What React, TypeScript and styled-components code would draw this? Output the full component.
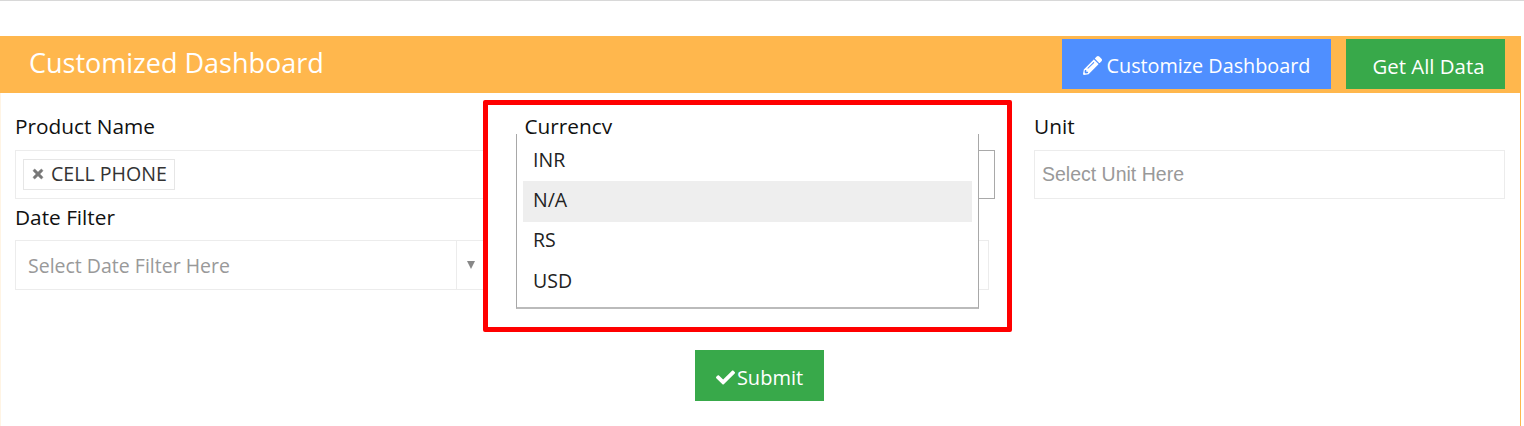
import React from "react";
import styled, { createGlobalStyle } from "styled-components";
import { FaPencilAlt, FaCheck, FaTimes } from "react-icons/fa";

const Global = createGlobalStyle`
  html, body { margin: 0; padding: 0; background: #fff; }
  body { font-family: "Open Sans", "Liberation Sans", sans-serif; overflow: hidden; }
`;

const Page = styled.div`
  position: relative;
  height: 426px;
  border-top: 1px solid #d8d8d8;
  box-sizing: border-box;
  padding-top: 35px;
`;

const Panel = styled.section`
  width: 1521px;
  height: 390px;
  box-sizing: border-box;
  border-right: 1px solid #ffb74d;
  border-left: 1px solid #fff4e4;
`;

const Header = styled.header`
  box-sizing: border-box;
  height: 57px;
  margin: 0 -1px;
  background: #ffb74d;
  display: flex;
  align-items: center;
  padding: 0 16px 2px 29px;
  color: #fff;
`;

const Title = styled.h1`
  flex: 1;
  margin: 0 0 1px;
  font-size: 27px;
  line-height: 34px;
  font-weight: 400;
`;

const Button = styled.button<{ $color: string; $width: number; $height: number; $gap: number; $size: number; $shift?: number }>`
  width: ${(p) => p.$width}px;
  height: ${(p) => p.$height}px;
  border: none;
  padding: 4px 0 0 ${(p) => p.$shift ?? 0}px;
  background: ${(p) => p.$color};
  color: #fff;
  font: 400 ${(p) => p.$size}px "Open Sans", sans-serif;
  display: inline-flex;
  align-items: center;
  justify-content: center;
  gap: ${(p) => p.$gap}px;
  svg { font-size: 19px; }
`;

const HeaderButton = styled(Button)`
  margin-left: 15px;
`;

const Form = styled.div`
  display: grid;
  grid-template-columns: repeat(3, 470.5px);
  column-gap: 39px;
  row-gap: 5px;
  padding: 20px 0 0 14px;
`;

const Group = styled.div<{ $inset?: number }>`
  margin-right: ${(p) => p.$inset ?? 0}px;
`;

const Label = styled.label<{ $gap: number }>`
  display: block;
  color: #111;
  font-size: 20.8px;
  line-height: 27px;
  margin-bottom: ${(p) => p.$gap}px;
`;

const Field = styled.div<{ $focus?: boolean; $h: number }>`
  height: ${(p) => p.$h}px;
  box-sizing: border-box;
  border: 1px solid ${(p) => (p.$focus ? "#a9a9a9" : "#ececec")};
  display: flex;
  align-items: center;
  background: #fff;
`;

const Placeholder = styled.span<{ $arial?: boolean }>`
  flex: 1;
  padding-left: ${(p) => (p.$arial ? 7 : 12)}px;
  color: #999;
  font-size: 19.5px;
  font-family: ${(p) => (p.$arial ? '"Liberation Sans", sans-serif' : '"Open Sans", sans-serif')};
`;

const Tag = styled.span`
  margin-left: 7px;
  height: 31px;
  box-sizing: border-box;
  border: 1px solid #e6e6e6;
  padding: 0 7px 2px;
  display: inline-flex;
  align-items: center;
  gap: 6px;
  color: #333;
  font-size: 19.6px;
  svg { color: #777; font-size: 14px; stroke: #777; stroke-width: 20px; }
`;

const Arrow = styled.span`
  width: 28px;
  align-self: stretch;
  border-left: 1px solid #ececec;
  display: flex;
  align-items: center;
  justify-content: center;
  &::after {
    content: "";
    border-left: 4.5px solid transparent;
    border-right: 4.5px solid transparent;
    border-top: 8px solid #888;
  }
`;

const Footer = styled.div`
  display: flex;
  justify-content: center;
  margin-top: 60px;
  padding-right: 2px;
`;

const Highlight = styled.div`
  position: absolute;
  left: 483px;
  top: 99px;
  width: 529px;
  height: 232px;
  box-sizing: border-box;
  border: 5px solid #ff0000;
  border-radius: 2px;
`;

const Menu = styled.ul`
  position: absolute;
  left: 516px;
  top: 133px;
  width: 463px;
  height: 175px;
  box-sizing: border-box;
  margin: 0;
  padding: 7px 6px 0;
  list-style: none;
  background: #fff;
  border: 1px solid #a8a8a8;
  border-top: none;
  border-bottom: 2px solid #bbb;
`;

const MenuItem = styled.li<{ $active?: boolean }>`
  height: 40.3px;
  box-sizing: border-box;
  display: flex;
  align-items: center;
  padding: 0 0 4px 10px;
  font-size: 19.5px;
  color: #222;
  background: ${(p) => (p.$active ? "#eeeeee" : "transparent")};
`;

export default function App() {
  return (
    <Page>
      <Global />
      <Panel>
        <Header>
          <Title>Customized Dashboard</Title>
          <HeaderButton $color="#4f8fff" $width={269} $height={50} $gap={5} $size={19.8}>
            <FaPencilAlt />
            Customize Dashboard
          </HeaderButton>
          <HeaderButton $color="#38a94a" $width={159} $height={50} $gap={0} $size={20.4} $shift={6}>Get All Data</HeaderButton>
        </Header>
        <Form>
          <Group>
            <Label $gap={10}>Product Name</Label>
            <Field $h={49}>
              <Tag>
                <FaTimes />
                CELL PHONE
              </Tag>
            </Field>
          </Group>
          <Group>
            <Label $gap={10}>Currency</Label>
            <Field $h={49} $focus />
          </Group>
          <Group>
            <Label $gap={10}>Unit</Label>
            <Field $h={49}>
              <Placeholder $arial>Select Unit Here</Placeholder>
            </Field>
          </Group>
          <Group>
            <Label $gap={9}>Date Filter</Label>
            <Field $h={50}>
              <Placeholder>Select Date Filter Here</Placeholder>
              <Arrow />
            </Field>
          </Group>
          <Group $inset={6}>
            <Label $gap={9}>&nbsp;</Label>
            <Field $h={50} />
          </Group>
        </Form>
        <Footer>
          <Button $color="#38a94a" $width={129} $height={51} $gap={2} $size={20}>
            <FaCheck />
            Submit
          </Button>
        </Footer>
      </Panel>
      <Highlight />
      <Menu>
        <MenuItem>INR</MenuItem>
        <MenuItem $active>N/A</MenuItem>
        <MenuItem>RS</MenuItem>
        <MenuItem>USD</MenuItem>
      </Menu>
    </Page>
  );
}
